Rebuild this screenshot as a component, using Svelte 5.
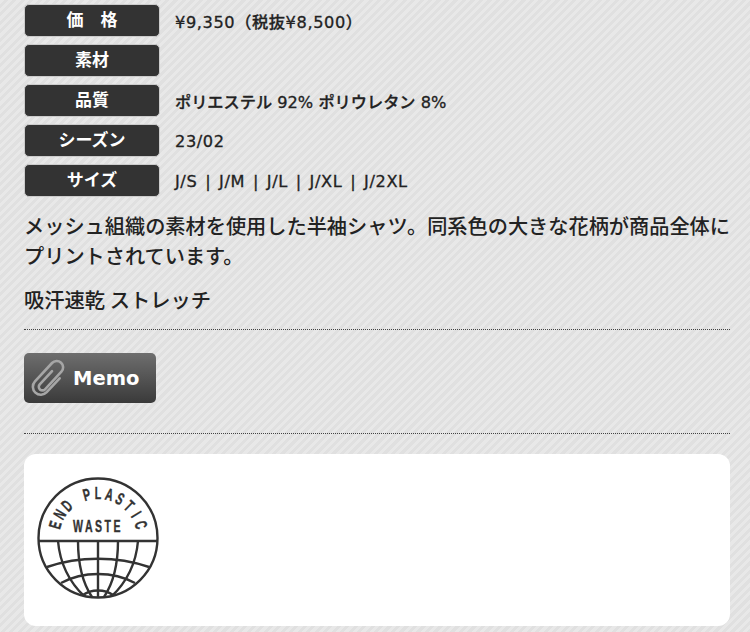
<script>
    const specs = [
        { label: "価　格", value: "¥9,350（税抜¥8,500）", wide: true },
        { label: "素材", value: "" },
        { label: "品質", value: "ポリエステル 92% ポリウレタン 8%" },
        { label: "シーズン", value: "23/02", wide: true },
        { label: "サイズ", value: "J/S | J/M | J/L | J/XL | J/2XL", wide: true },
    ];

    // logo letters sit on a circle, each one turned to its own angle
    const arcLetters = "END PLASTIC".split("").map((ch, i) => ({ ch, angle: -73 + i * 14.6 }));
</script>

<div class="page">
    <dl class="specs">
        {#each specs as row}
            <div class="row">
                <dt>{row.label}</dt>
                <dd class:wide={row.wide}>{row.value}</dd>
            </div>
        {/each}
    </dl>

    <p class="desc">メッシュ組織の素材を使用した半袖シャツ。同系色の大きな花柄が商品全体にプリントされています。</p>
    <p class="tags">吸汗速乾 ストレッチ</p>

    <div class="memo-wrap">
        <button class="memo">
            <svg width="40" height="40" viewBox="0 0 40 40" fill="none" stroke="#a6a6a6" stroke-width="2.6" stroke-linecap="round">
                <path transform="rotate(43 20 20)" d="M19 13 V31 a3.6 3.6 0 0 0 7.2 0 V7 a6.4 6.4 0 0 0 -12.8 0 V32 a8 8 0 0 0 16 0 V13" />
            </svg>
            <span>Memo</span>
        </button>
    </div>

    <div class="card">
        <svg class="logo" width="122" height="122" viewBox="0 0 122 122" fill="none" stroke="#333" stroke-width="2.4">
            <defs>
                <clipPath id="globe"><circle cx="61" cy="61" r="59.5" /></clipPath>
            </defs>
            <circle cx="61" cy="61" r="59.5" />
            <path d="M2 64 H120" />
            <g clip-path="url(#globe)">
                <path d="M61 64 V120" />
                <path d="M41 64 C41 85 45 105 55 120" />
                <path d="M81 64 C81 85 77 105 67 120" />
                <path d="M21 64 C23 87 32 105 48 120" />
                <path d="M101 64 C99 87 90 105 74 120" />
                <path d="M10 90 C42 79 80 79 112 90" />
                <path d="M24 106 C46 94 76 94 98 106" />
                <path d="M46 118 C54 112 68 112 76 118" />
            </g>
            {#each arcLetters as l}
                <text class="logo-letter" text-anchor="middle" transform="rotate({l.angle} 61 61) translate(61 22) scale(0.62 1)">{l.ch}</text>
            {/each}
            <text class="logo-mid" text-anchor="middle" transform="translate(61 55) scale(0.62 1)">WASTE</text>
        </svg>
    </div>
</div>

<style>
    :global(body) {
        margin: 0;
        background-color: #e4e4e4;
        background-image: repeating-linear-gradient(135deg, #e8e8e8 0 3px, #e0e0e0 3px 6px);
    }

    .page {
        height: 632px;
        overflow: hidden;
        box-sizing: border-box;
        padding: 5px 20px 0 24px;
        font-family: "DejaVu Sans", "Noto Sans CJK JP", sans-serif;
        color: #222;
    }

    .specs {
        margin: 0;
    }

    .row {
        display: flex;
        align-items: center;
        gap: 15px;
        margin-bottom: 8px;
    }

    dt {
        width: 136px;
        height: 33px;
        margin-top: -1px;
        line-height: 31px;
        flex: none;
        text-align: center;
        background: #333;
        border: 1px solid #ccc;
        box-sizing: border-box;
        border-radius: 5px;
        color: #fff;
        font-size: 17px;
        font-weight: 700;
    }

    dd {
        margin: 0;
        font-size: 16.2px;
        font-weight: 500;
        font-family: "DejaVu Sans", "Noto Sans CJK JP", sans-serif;
        -webkit-text-stroke: 0.3px #222;
    }

    dd.wide {
        word-spacing: 2.1px;
        letter-spacing: 0.6px;
    }

    .desc {
        margin: 14px 0 0;
        font-size: 20.2px;
        line-height: 30px;
        font-weight: 500;
        font-family: "Noto Sans CJK JP", sans-serif;
        color: #222;
    }

    .tags {
        margin: 13px 0 0;
        padding-bottom: 15px;
        font-size: 20.3px;
        line-height: 30px;
        font-weight: 500;
        font-family: "Noto Sans CJK JP", sans-serif;
        border-bottom: 1px dotted #444;
    }

    .memo-wrap {
        padding: 23px 0 30px;
        border-bottom: 1px dotted #444;
    }

    .memo {
        display: flex;
        align-items: center;
        gap: 5px;
        width: 132px;
        height: 50px;
        padding: 1px 0 0 4px;
        border: 0;
        border-radius: 5px;
        background: linear-gradient(#6e6e6e, #3a3a3a);
        color: #fff;
        font-family: "DejaVu Sans", sans-serif;
        font-size: 19.5px;
        font-weight: 700;
    }

    .memo svg {
        margin-top: -3px;
    }

    .card {
        margin-top: 20px;
        height: 172px;
        background: #fff;
        border-radius: 12px;
        box-sizing: border-box;
        padding: 23px 0 0 13px;
    }

    .logo {
        display: block;
    }

    .logo text {
        fill: #333;
        stroke: #333;
        stroke-width: 0.4;
        font-family: "Liberation Sans", sans-serif;
        font-weight: 700;
        font-size: 17px;
    }

    .logo-mid {
        letter-spacing: 4px;
    }
</style>
